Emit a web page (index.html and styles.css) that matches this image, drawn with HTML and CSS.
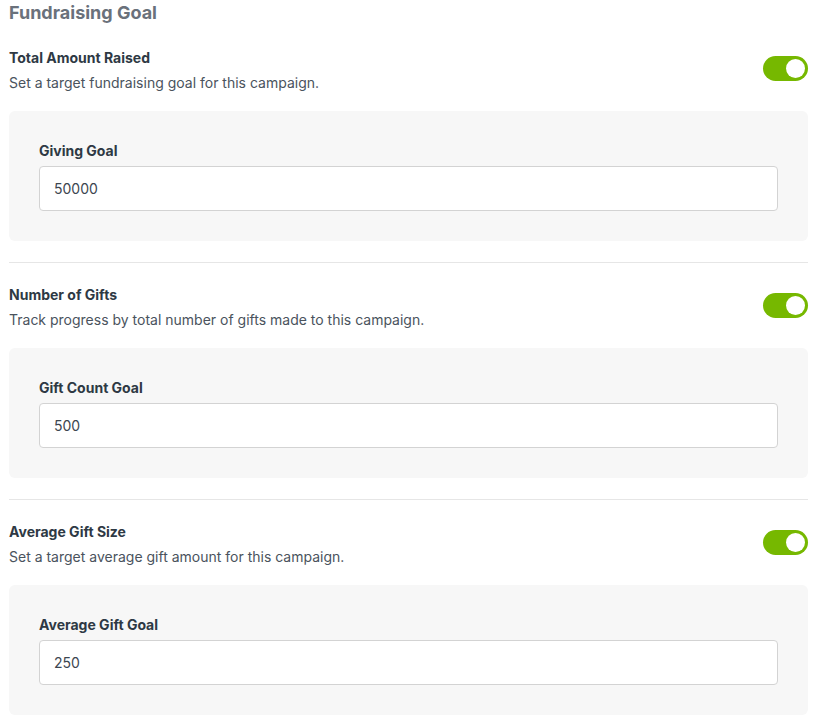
FILE: index.html
```html
<!DOCTYPE html>
<html lang="en">
<head>
<meta charset="utf-8">
<title>Fundraising Goal</title>
<link rel="stylesheet" href="styles.css">
</head>
<body>
<div class="panel">
  <h2 class="panel-title">Fundraising Goal</h2>

  <section class="goal">
    <div class="goal-head">
      <div class="goal-text">
        <div class="goal-name">Total Amount Raised</div>
        <div class="goal-desc">Set a target fundraising goal for this campaign.</div>
      </div>
      <span class="toggle"><span class="knob"></span></span>
    </div>
    <div class="goal-box">
      <label class="field-label">Giving Goal</label>
      <input class="field-input" type="text" value="50000">
    </div>
  </section>

  <hr class="divider">

  <section class="goal">
    <div class="goal-head">
      <div class="goal-text">
        <div class="goal-name">Number of Gifts</div>
        <div class="goal-desc">Track progress by total number of gifts made to this campaign.</div>
      </div>
      <span class="toggle"><span class="knob"></span></span>
    </div>
    <div class="goal-box">
      <label class="field-label">Gift Count Goal</label>
      <input class="field-input" type="text" value="500">
    </div>
  </section>

  <hr class="divider">

  <section class="goal">
    <div class="goal-head">
      <div class="goal-text">
        <div class="goal-name">Average Gift Size</div>
        <div class="goal-desc">Set a target average gift amount for this campaign.</div>
      </div>
      <span class="toggle"><span class="knob"></span></span>
    </div>
    <div class="goal-box">
      <label class="field-label">Average Gift Goal</label>
      <input class="field-input" type="text" value="250">
    </div>
  </section>
</div>
</body>
</html>
```

FILE: styles.css
```css
* { box-sizing: border-box; }
html, body { margin: 0; padding: 0; background: #ffffff; }
body {
  font-family: Inter, "Noto Sans", "Liberation Sans", sans-serif;
  color: #2f3a45;
}
.panel {
  width: 799px;
  margin-left: 9px;
  padding-top: 2px;
}
.panel-title {
  margin: 0;
  font-size: 18px;
  line-height: 22px;
  font-weight: 700;
  color: #6a717b;
}
.goal { display: flex; flex-direction: column; }
.panel-title + .goal { margin-top: 24px; }
.goal-head {
  display: flex;
  align-items: center;
  justify-content: space-between;
}
.goal-name {
  font-size: 14px;
  line-height: 20px;
  font-weight: 700;
  color: #2e3944;
}
.goal-desc {
  margin-top: 3px;
  font-size: 14px;
  line-height: 24px;
  color: #4a535d;
}
.toggle {
  width: 45px;
  height: 25px;
  border-radius: 13px;
  background: #76b800;
  display: flex;
  align-items: center;
  justify-content: flex-end;
  padding-right: 3px;
  margin-top: -7px;
}
.knob {
  width: 19px;
  height: 19px;
  border-radius: 50%;
  background: #ffffff;
}
.goal-box {
  margin-top: 16px;
  background: #f7f7f7;
  border-radius: 6px;
  padding: 30px;
  display: flex;
  flex-direction: column;
}
.field-label {
  font-size: 14px;
  line-height: 20px;
  font-weight: 700;
  color: #2e3944;
}
.field-input {
  margin-top: 5px;
  height: 45px;
  border: 1px solid #d3d3d3;
  border-radius: 4px;
  background: #ffffff;
  padding: 0 14px;
  font-family: Inter, "Noto Sans", "Liberation Sans", sans-serif;
  font-size: 14px;
  color: #3c4650;
  outline: none;
}
.divider {
  border: 0;
  height: 1px;
  background: #e6e6e6;
  margin: 21px 0 22px;
}
```
